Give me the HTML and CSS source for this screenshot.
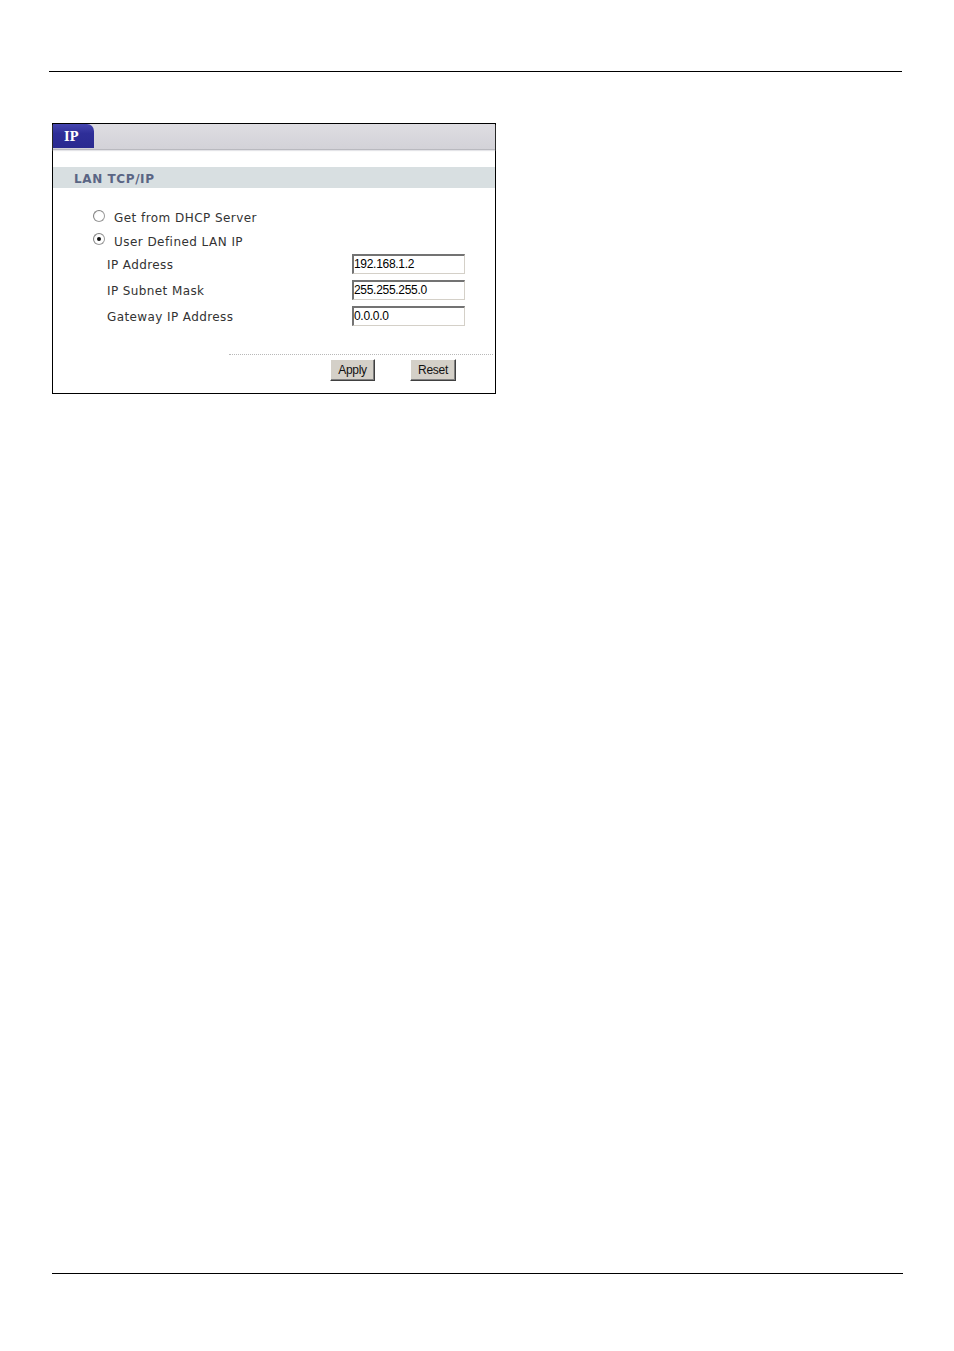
FILE: index.html
```html
<!DOCTYPE html>
<html>
<head>
<meta charset="utf-8">
<link rel="stylesheet" href="styles.css">
</head>
<body>
<div class="rule-top"></div>
<div class="panel">
  <div class="tabbar"><div class="tab">IP</div></div>
  <div class="section">LAN TCP/IP</div>
  <div class="radio-row r1"><span class="radio"></span><span class="rlabel">Get from DHCP Server</span></div>
  <div class="radio-row r2"><span class="radio checked"></span><span class="rlabel">User Defined LAN IP</span></div>
  <div class="field"><span class="flabel">IP Address</span><span class="input">192.168.1.2</span></div>
  <div class="field"><span class="flabel">IP Subnet Mask</span><span class="input">255.255.255.0</span></div>
  <div class="field"><span class="flabel">Gateway IP Address</span><span class="input">0.0.0.0</span></div>
  <div class="dots"></div>
  <div class="buttons"><span class="btn apply">Apply</span><span class="btn reset">Reset</span></div>
</div>
<div class="rule-bottom"></div>
</body>
</html>
```
FILE: styles.css
```css
html, body { margin: 0; padding: 0; background: #fff; }
body { width: 954px; height: 1351px; position: relative; font-family: "DejaVu Sans", Verdana, sans-serif; }
.rule-top { margin: 71px 0 0 49px; width: 853px; height: 1px; background: #000; }
.panel {
  margin: 51px 0 0 52px; width: 442px; height: 269px; border: 1px solid #000;
  box-sizing: content-box;
}
.tabbar {
  height: 25px; background: linear-gradient(#dedde2, #d3d2d8);
  border-bottom: 1px solid #b9b9bf; box-shadow: 0 1px 1px #e4e4e8;
}
.tab {
  width: 41px; height: 24px; background: linear-gradient(#4545b0, #2e2e98 40%, #2a2a90);
  border-top-right-radius: 7px; color: #fff; font-weight: bold; font-size: 12px;
  font-family: "DejaVu Serif", serif;
  line-height: 26px; padding-left: 11px; box-sizing: border-box;
}
.section {
  margin-top: 17px; height: 21px; background: #d8dfe1; color: #5a6584;
  font-size: 12px; font-weight: bold; line-height: 24px; padding-left: 21px;
  letter-spacing: 0.6px;
}
.radio-row { display: flex; align-items: center; padding-left: 40px; font-size: 12px; color: #333; }
.r1 { margin-top: 17px; height: 24px; padding-top: 2px; box-sizing: border-box; }
.r2 { height: 22px; padding-top: 3px; box-sizing: border-box; }
.radio {
  width: 10px; height: 10px; border-radius: 50%; border: 1px solid #9a9a9a;
  border-top-color: #808080; border-left-color: #808080;
  background: radial-gradient(circle at 60% 60%, #fff 50%, #e6e6e6 100%);
  position: relative; margin-right: 9px; margin-top: -5px;
}
.radio.checked::after {
  content: ""; position: absolute; left: 3px; top: 3px; width: 4px; height: 4px;
  border-radius: 50%; background: #111;
}
.rlabel { letter-spacing: 0.45px; }
.field { display: flex; align-items: center; height: 26px; padding-left: 54px; font-size: 12px; color: #333; }
.flabel { width: 245px; letter-spacing: 0.4px; padding-top: 1px; }
.input {
  width: 113px; height: 20px; box-sizing: border-box; border: 1px solid #d4d0c8;
  border-top: 2px solid #737373; border-left: 2px solid #737373;
  font-family: "Liberation Sans", Arial, sans-serif; font-size: 12px; color: #000;
  line-height: 17px; padding-left: 0; letter-spacing: -0.3px;
}
.dots { margin: 25px 0 0 176px; width: 264px; border-top: 1px dotted #b8b8b8; }
.buttons { display: flex; margin-top: 4px; padding-left: 277px; }
.btn {
  height: 22px; box-sizing: border-box; background: #d4d0c8;
  border: 1px solid #fff; border-right-color: #404040; border-bottom-color: #404040;
  box-shadow: inset -1px -1px 0 #808080;
  font-family: "Liberation Sans", Arial, sans-serif; font-size: 12px; color: #111;
  display: flex; align-items: center; justify-content: center; letter-spacing: -0.3px;
}
.apply { width: 45px; }
.reset { width: 46px; margin-left: 35px; }
.rule-bottom { position: absolute; left: 52px; top: 1273px; width: 851px; height: 1px; background: #000; }
```
